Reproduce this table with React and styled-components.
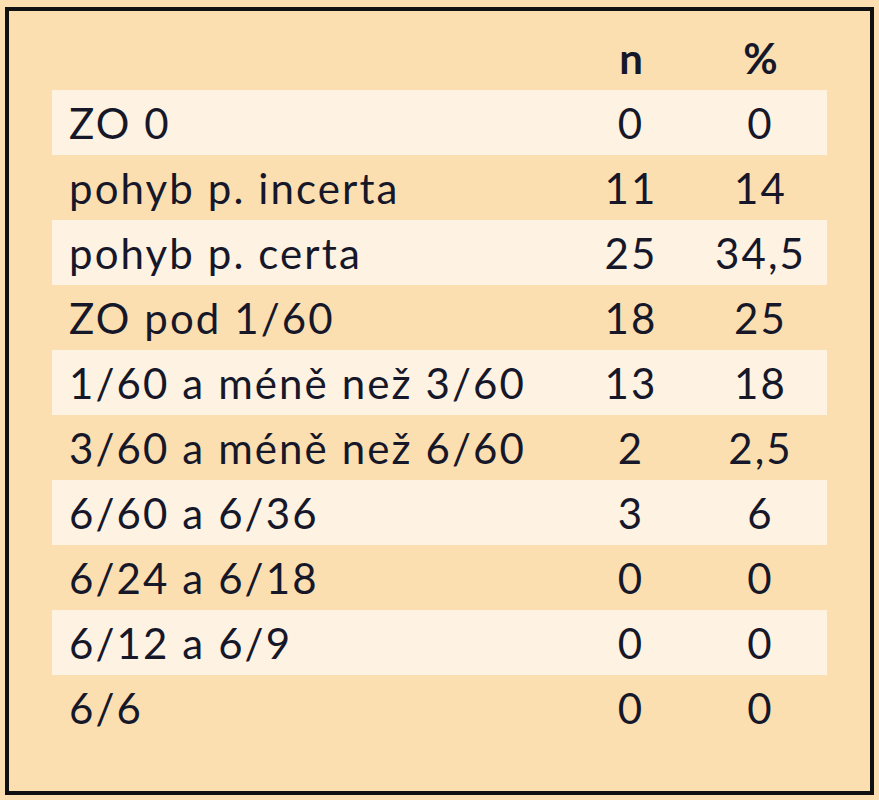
import React from "react";
import styled, { createGlobalStyle } from "styled-components";

const GlobalStyle = createGlobalStyle`
  html, body {
    margin: 0;
    padding: 0;
    background: #fcdfb1;
  }
`;

const Page = styled.div`
  padding: 7px 5px 0 5px;
  width: 879px;
  height: 800px;
  box-sizing: border-box;
  background: #fcdfb1;
`;

const Frame = styled.div`
  width: 869px;
  height: 788px;
  box-sizing: border-box;
  border: 4px solid #111;
  padding: 14px 43px 0 43px;
  font-family: Lato, "Open Sans", sans-serif;
  color: #16182a;
`;

const Table = styled.div`
  display: grid;
  grid-template-columns: 516px 124px 135px;
`;

const Row = styled.div`
  display: contents;
`;

const Cell = styled.div`
  height: 65px;
  display: flex;
  align-items: center;
  justify-content: ${({ $center }) => ($center ? "center" : "flex-start")};
  padding-left: ${({ $center }) => ($center ? "2px" : "17px")};
  font-size: 42px;
  letter-spacing: ${({ $head }) => ($head ? "0" : "2.1px")};
  font-weight: ${({ $head }) => ($head ? 700 : 400)};
  background: ${({ $striped }) => ($striped ? "#fef2e3" : "transparent")};
  white-space: nowrap;
`;

const rows = [
  ["ZO 0", "0", "0"],
  ["pohyb p. incerta", "11", "14"],
  ["pohyb p. certa", "25", "34,5"],
  ["ZO pod 1/60", "18", "25"],
  ["1/60 a méně než 3/60", "13", "18"],
  ["3/60 a méně než 6/60", "2", "2,5"],
  ["6/60 a 6/36", "3", "6"],
  ["6/24 a 6/18", "0", "0"],
  ["6/12 a 6/9", "0", "0"],
  ["6/6", "0", "0"],
];

export default function App() {
  return (
    <Page>
      <GlobalStyle />
      <Frame>
        <Table>
          <Row>
            <Cell />
            <Cell $center $head>n</Cell>
            <Cell $center $head>%</Cell>
          </Row>
          {rows.map(([label, n, pct], i) => (
            <Row key={i}>
              <Cell $striped={i % 2 === 0}>{label}</Cell>
              <Cell $center $striped={i % 2 === 0}>{n}</Cell>
              <Cell $center $striped={i % 2 === 0}>{pct}</Cell>
            </Row>
          ))}
        </Table>
      </Frame>
    </Page>
  );
}
